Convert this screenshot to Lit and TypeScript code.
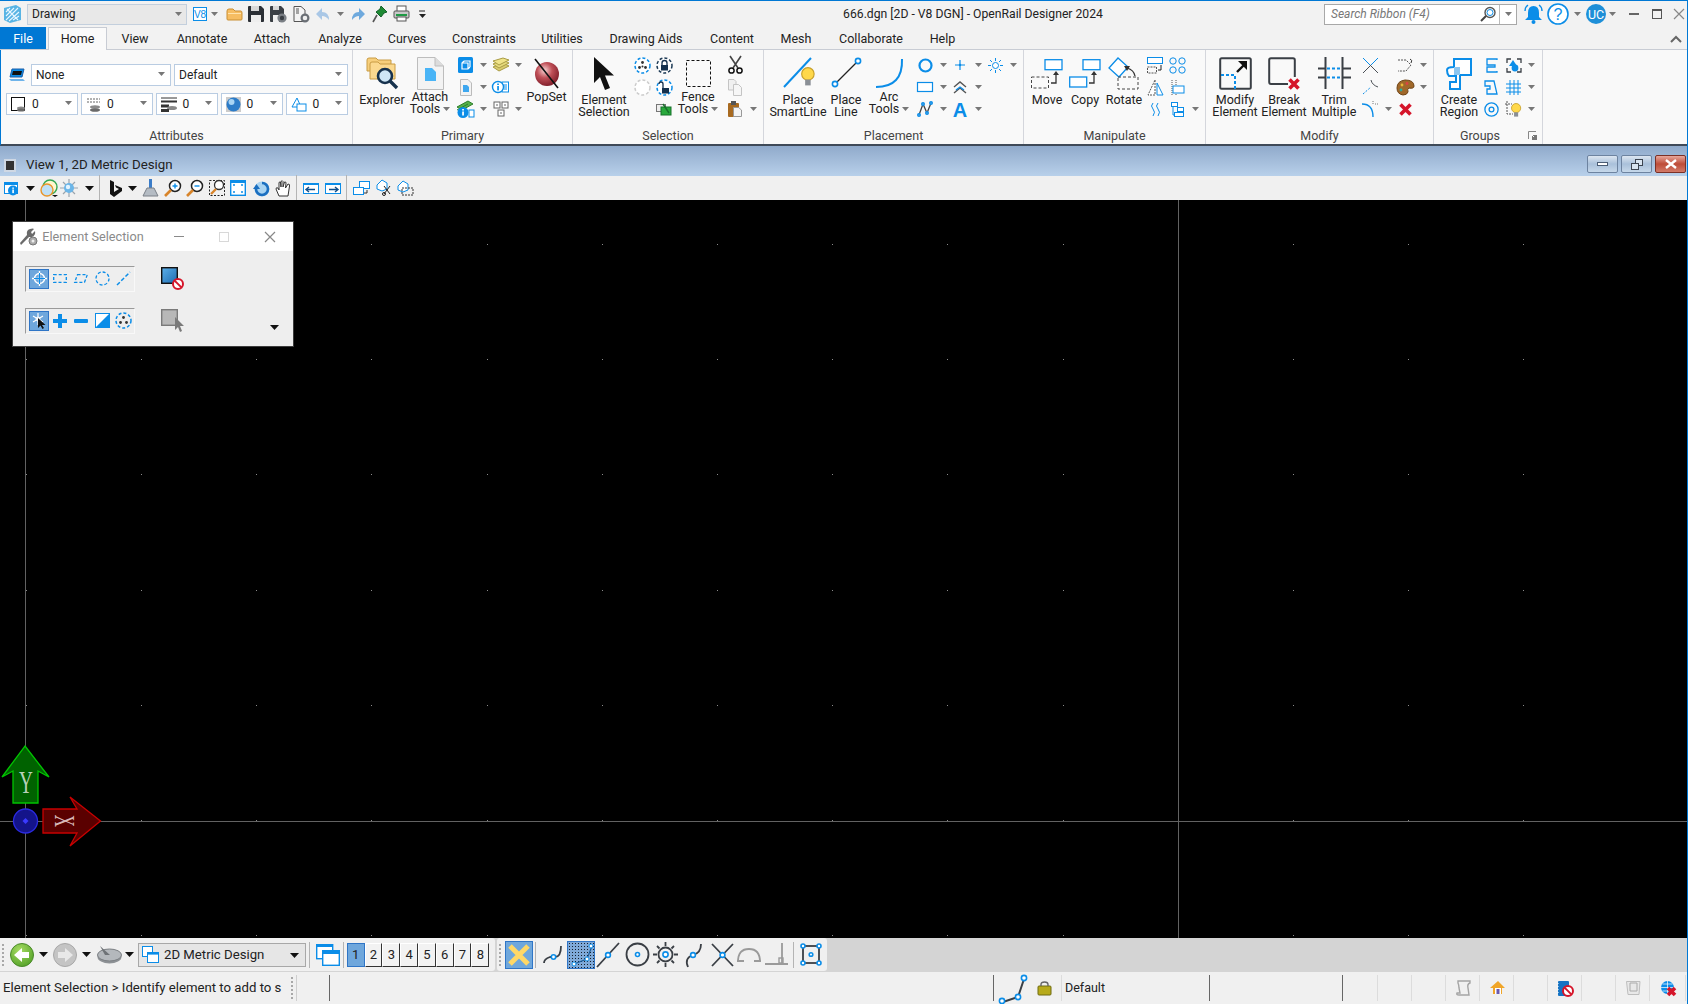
import { LitElement, html, css, svg } from 'lit';
import { customElement } from 'lit/decorators.js';

const B = '#0b8de8';
const D = '#3a3f45';
const R = '#d5152a';

type Ico = { w: number; h: number; b: unknown };
const ic = (w: number, h: number, b: unknown): Ico => ({ w, h, b });

const bulb = (x: number, y: number, s = 1) => svg`<g transform="translate(${x} ${y}) scale(${s})"><circle cx="6" cy="6" r="5.4" fill="#ffd84a" stroke="#c8a02a"/><rect x="3.6" y="11" width="4.8" height="5" fill="#8a8f96"/></g>`;
const redX = (x: number, y: number, s = 5) => svg`<path d="M${x - s} ${y - s}L${x + s} ${y + s}M${x + s} ${y - s}L${x - s} ${y + s}" stroke="${R}" stroke-width="3.6"/>`;
const no = (x: number, y: number) => svg`<circle cx="${x}" cy="${y}" r="5" fill="#fff" stroke="${R}" stroke-width="2"/><path d="M${x - 3.4} ${y - 3.4}L${x + 3.4} ${y + 3.4}" stroke="${R}" stroke-width="2"/>`;
const node = (x: number, y: number, r = 2.2) => svg`<circle cx="${x}" cy="${y}" r="${r}" fill="#fff" stroke="${B}" stroke-width="1.6"/>`;

const I: Record<string, Ico> = {
  arr: ic(7, 4, svg`<path d="M0 0H7L3.5 4Z" fill="#777"/>`),
  blk: ic(9, 5, svg`<path d="M0 0H9L4.5 5Z" fill="#111"/>`),
  sep: ic(1, 26, svg`<rect width="1" height="26" fill="#b4b4b4"/>`),
  grip: ic(2, 22, svg`<path d="M1 0V22" stroke="#a8a8a8" stroke-width="2" stroke-dasharray="2 2"/>`),
  logo: ic(17, 18, svg`<path d="M0 3L12 0L17 3V15L6 18L0 15Z" fill="#58b4e4"/><path d="M2 15L14 3M5 16L15 7M2 11L10 3M2 7L6 3M9 15L15 11M3 4L14 15" stroke="#e8f6ff" stroke-width="1.1"/>`),
  v8: ic(14, 14, svg`<rect x=".5" y=".5" width="13" height="13" fill="#fff" stroke="${B}"/><text x="7" y="11" font-size="10" font-family="Liberation Sans" text-anchor="middle" fill="${B}">V8</text>`),
  folder: ic(17, 13, svg`<path d="M1 3Q1 1 3 1H7L9 3H15Q16 3 16 5V11Q16 12 15 12H2Q1 12 1 11Z" fill="#f6bd62" stroke="#c98f35"/><rect x="2" y="5" width="13" height="1" fill="#ffe3ac"/>`),
  save: ic(16, 16, svg`<path d="M0 1Q0 0 1 0H13L16 3V15Q16 16 15 16H1Q0 16 0 15Z" fill="#2b2f35"/><rect x="3" y="0" width="8" height="5" fill="#d8d8d8"/><rect x="3" y="9" width="10" height="7" fill="#eee"/>`),
  saveset: ic(17, 17, svg`<path d="M0 1Q0 0 1 0H11L14 3V15Q14 16 13 16H1Q0 16 0 15Z" fill="#3a3f45"/><rect x="3" y="0" width="6" height="4" fill="#d8d8d8"/><rect x="3" y="9" width="6" height="7" fill="#eee"/><circle cx="12" cy="12" r="3.4" fill="none" stroke="#7a7f85" stroke-width="2.4"/>`),
  docset: ic(17, 17, svg`<path d="M1 .5H8L12 4V15.5H1Z" fill="#f4f4f4" stroke="#555"/><path d="M3 3H6M3 5H6M3 7H6" stroke="#555"/><circle cx="12" cy="12" r="3.4" fill="#eee" stroke="#6a6f75" stroke-width="2.2"/>`),
  undo: ic(14, 13, svg`<path d="M6 0L0 6L6 12V8Q10 8 13 12Q13 4 6 4Z" fill="#a9c7e6"/>`),
  redo: ic(14, 13, svg`<path d="M8 0L14 6L8 12V8Q4 8 1 12Q1 4 8 4Z" fill="#6ea9dd"/>`),
  pin: ic(14, 17, svg`<path d="M8 0L14 6L11 7L8 11L3 6L7 3Z" fill="#1e8a34" stroke="#14602a"/><path d="M4 9L0 16" stroke="#555" stroke-width="1.6"/>`),
  print: ic(17, 16, svg`<rect x="4" y="0" width="9" height="6" fill="#fff" stroke="#555"/><rect x="1" y="5" width="15" height="7" rx="1" fill="#c8c8c8" stroke="#555"/><rect x="3" y="8" width="11" height="2" fill="#1e9a44"/><rect x="4" y="11" width="9" height="4" fill="#fff" stroke="#555"/>`),
  more: ic(7, 7, svg`<path d="M0 0H6" stroke="#222"/><path d="M0 3H7L3.5 7Z" fill="#222"/>`),
  searchI: ic(16, 16, svg`<circle cx="10" cy="6.5" r="5" fill="none" stroke="#555" stroke-width="1.4"/><circle cx="10" cy="6.5" r="3" fill="none" stroke="${B}"/><path d="M6 10L1 15" stroke="#444" stroke-width="2"/>`),
  bell: ic(21, 22, svg`<path d="M10.5 3Q16 3 16 10V14L19 17H2L5 14V10Q5 3 10.5 3Z" fill="${B}"/><circle cx="10.5" cy="19" r="2" fill="${B}"/><path d="M2 8Q2 4 5 2M19 8Q19 4 16 2" fill="none" stroke="${B}" stroke-width="1.4"/>`),
  help: ic(22, 22, svg`<circle cx="11" cy="11" r="10" fill="#fff" stroke="${B}" stroke-width="1.6"/><text x="11" y="16.5" font-size="16" font-family="Liberation Sans" text-anchor="middle" fill="${B}">?</text>`),
  uc: ic(20, 20, svg`<circle cx="10" cy="10" r="10" fill="#1e8fd8"/><text x="10" y="14.5" font-size="12.5" font-family="Roboto" text-anchor="middle" fill="#fff">UC</text>`),
  wmin: ic(10, 2, svg`<rect width="10" height="2" fill="#666"/>`),
  wmax: ic(10, 10, svg`<rect x=".5" y=".5" width="9" height="9" fill="none" stroke="#555" stroke-width="1"/><rect width="10" height="2" fill="#555"/>`),
  wclose: ic(10, 10, svg`<path d="M0 0L10 10M10 0L0 10" stroke="#888" stroke-width="1.2"/>`),
  chev: ic(12, 6, svg`<path d="M1 6L6 1L11 6" fill="none" stroke="#666" stroke-width="2"/>`),
  vmin: ic(11, 4, svg`<rect x=".5" y=".5" width="10" height="3" fill="#fff" stroke="#4a5c74"/>`),
  vrest: ic(12, 11, svg`<rect x="4.5" y=".5" width="7" height="6" fill="#d8e4f0" stroke="#3c4450"/><rect x=".5" y="4.5" width="7" height="6" fill="#d8e4f0" stroke="#3c4450"/>`),
  // attributes
  layerI: ic(16, 15, svg`<path d="M3 1H15L13 9H1Z" fill="${B}" stroke="#1d5fa8"/><path d="M4 3H13L12 7H3Z" fill="#111"/><path d="M0 11H14L16 13H2Z" fill="#6fb4ea"/>`),
  colorA: ic(15, 15, svg`<rect x=".5" y=".5" width="13" height="13" fill="#fff" stroke="#111"/><ellipse cx="10" cy="11" rx="4" ry="1.6" fill="#8a8a8a"/><ellipse cx="10" cy="13" rx="4" ry="1.6" fill="#6a6a6a"/>`),
  styleA: ic(15, 15, svg`<path d="M1 2H14M1 5H14" stroke="#666" stroke-dasharray="2 1"/><ellipse cx="9" cy="10" rx="5" ry="1.8" fill="#8a8a8a"/><ellipse cx="9" cy="13" rx="5" ry="1.8" fill="#6a6a6a"/>`),
  weightA: ic(16, 15, svg`<path d="M0 1H16" stroke="#333"/><path d="M0 4.5H16" stroke="#333" stroke-width="2"/><path d="M0 9H8" stroke="#333" stroke-width="3"/><ellipse cx="11" cy="11" rx="5" ry="2" fill="#888"/><path d="M0 13.5H8" stroke="#333" stroke-width="3"/>`),
  transA: ic(15, 15, svg`<rect width="15" height="15" fill="#ccc"/><circle cx="7.5" cy="7.5" r="7" fill="#2d7cc8"/><circle cx="5.5" cy="5" r="3" fill="#a8d4f4"/>`),
  prioA: ic(16, 15, svg`<path d="M6 1L1 10H10Z" fill="#fff" stroke="${B}"/><rect x="6" y="7" width="9" height="7" fill="#fff" stroke="${B}"/>`),
  // primary
  explorer: ic(34, 33, svg`<path d="M2 3Q2 1 4 1H11L13 3H26V14H2Z" fill="#f7cf7c" stroke="#c99c45"/><path d="M5 7Q5 5 7 5H13L15 7H30V22H5Z" fill="#fbd98f" stroke="#c99c45"/><circle cx="20" cy="19" r="7" fill="#cfe6f5" stroke="#17324d" stroke-width="2.6"/><path d="M25 24L32 31" stroke="#17324d" stroke-width="3.4"/>`),
  attach: ic(27, 33, svg`<path d="M.5 .5H18L26.5 9V32.5H.5Z" fill="#f3f3f3" stroke="#bdbdbd"/><path d="M18 .5V9H26.5" fill="#dcdcdc" stroke="#bdbdbd"/><path d="M8 11H15L19 15V24H8Z" fill="#49b4f6"/>`),
  box3d: ic(15, 16, svg`<rect width="15" height="16" rx="1.5" fill="${B}"/><path d="M6 4H12V10M6 4L4 6V12H10L12 10M4 6H10V12" fill="none" stroke="#fff" stroke-width="1.2"/>`),
  sheets: ic(16, 14, svg`<path d="M0 9L10 5L16 8L6 13Z" fill="#d9cc70" stroke="#a99c45"/><path d="M0 6L10 2L16 5L6 10Z" fill="#e6da7c" stroke="#a99c45"/><path d="M0 3L10 0L16 2L6 7Z" fill="#f0e48a" stroke="#a99c45"/>`),
  pageB: ic(12, 17, svg`<path d="M.5 .5H8L11.5 4V16.5H.5Z" fill="#f3f3f3" stroke="#bbb"/><path d="M3 6H7L9 8V13H3Z" fill="#3ea7ef"/>`),
  infoBox: ic(16, 12, svg`<rect x="9" y="1" width="6.5" height="10" fill="#fff" stroke="${B}"/><path d="M10.5 4H14M10.5 6H14M10.5 8H14" stroke="${B}"/><circle cx="5" cy="6" r="5.5" fill="#fff" stroke="${B}" stroke-width="1.4"/><rect x="4.2" y="2.5" width="1.7" height="1.5" fill="${B}"/><rect x="4.2" y="5" width="1.7" height="4.4" fill="${B}"/>`),
  refG: ic(17, 17, svg`<path d="M0 6L11 0L16 3L5 9Z" fill="#57b04a" stroke="#2d7f2a"/><path d="M0 9L11 3" stroke="#2d7f2a"/><circle cx="6" cy="11.5" r="5.5" fill="${B}"/><rect x="5.2" y="8" width="1.7" height="1.5" fill="#fff"/><rect x="5.2" y="10.5" width="1.7" height="4" fill="#fff"/><rect x="12" y="9" width="5" height="7" fill="#fff" stroke="${B}"/>`),
  tree: ic(16, 16, svg`<rect x="1" y="1" width="6" height="6" fill="#fff" stroke="#666"/><rect x="9" y="1" width="6" height="6" fill="#fff" stroke="#666"/><rect x="5" y="9" width="6" height="6" fill="#fff" stroke="#666"/><path d="M4 3V5M12 3V5M8 11V13" stroke="#666"/>`),
  popset: ic(27, 31, svg`<defs><radialGradient id="ps" cx=".4" cy=".35" r=".7"><stop offset="0" stop-color="#f8d4d4"/><stop offset=".45" stop-color="#c05058"/><stop offset="1" stop-color="#7a1a26"/></radialGradient></defs><circle cx="14" cy="16" r="12" fill="url(#ps)"/><path d="M2 1L25 30" stroke="#111" stroke-width="1.6"/>`),
  // selection
  cursor: ic(22, 33, svg`<path d="M1 0V26L7 20L12 33L17 31L12 18.5H21Z" fill="#111"/>`),
  selDots: ic(17, 17, svg`<circle cx="8.5" cy="8.5" r="7.5" fill="#fff" stroke="${B}" stroke-width="1.5" stroke-dasharray="3 2"/><circle cx="8.5" cy="5.5" r="1.4" fill="#333"/><circle cx="5.5" cy="10.5" r="1.4" fill="#333"/><circle cx="11.5" cy="10.5" r="1.4" fill="#333"/><circle cx="8.5" cy="9.5" r="1" fill="#333"/>`),
  selLock: ic(17, 17, svg`<circle cx="8.5" cy="8.5" r="7.5" fill="#fff" stroke="#1d3a55" stroke-width="1.5" stroke-dasharray="3 2"/><rect x="5" y="8" width="7" height="5.5" fill="#14304d"/><path d="M6 8V6Q6 3.5 8.5 3.5T11 6V8" fill="none" stroke="#14304d" stroke-width="1.3"/>`),
  selGray: ic(17, 17, svg`<circle cx="8.5" cy="8.5" r="7.5" fill="#fff" stroke="#ccc" stroke-width="1.5" stroke-dasharray="3 2"/>`),
  selOpen: ic(17, 17, svg`<circle cx="8.5" cy="8.5" r="7.5" fill="#fff" stroke="${B}" stroke-width="1.5" stroke-dasharray="3 2"/><rect x="6" y="9" width="7" height="5.5" fill="#14304d"/><path d="M7 9V5Q7 3 5 3T3 5" fill="none" stroke="#14304d" stroke-width="1.3"/>`),
  greenCp: ic(16, 14, svg`<rect x=".5" y="2.5" width="9" height="7" fill="#eee" stroke="#777"/><rect x="5" y="5" width="10" height="8" fill="#29a93c" stroke="#17702a"/><path d="M7 2L13 11" stroke="#17702a" stroke-width="1.4"/>`),
  fence: ic(25, 27, svg`<rect x=".5" y=".5" width="24" height="26" fill="none" stroke="#111" stroke-dasharray="3 2"/>`),
  scissors: ic(15, 18, svg`<path d="M2 0L10 12M13 0L5 12" stroke="#444" stroke-width="1.6"/><circle cx="3.5" cy="14.5" r="2.6" fill="none" stroke="#111" stroke-width="1.5"/><circle cx="11.5" cy="14.5" r="2.6" fill="none" stroke="#111" stroke-width="1.5"/>`),
  copyG: ic(14, 17, svg`<path d="M.5 .5H6L8 2.5V11H.5Z" fill="#f0f0f0" stroke="#c4c4c4"/><path d="M5.5 5.5H10.5L13.5 8.5V16.5H5.5Z" fill="#f6f6f6" stroke="#c4c4c4"/>`),
  paste: ic(14, 16, svg`<rect x="0" y="2" width="11" height="14" rx="1" fill="#a86a20"/><rect x="3" y="0" width="5" height="4" fill="#555"/><path d="M5.5 6.5H10.5L13.5 9V15.5H5.5Z" fill="#f4f4f4" stroke="#999"/>`),
  // placement
  smart: ic(31, 32, svg`<path d="M1 30L28 1" stroke="${B}" stroke-width="2"/>${bulb(18, 10, 1.15)}`),
  pline: ic(31, 31, svg`<path d="M4 27L27 4" stroke="#222" stroke-width="1.2"/>${node(4, 27, 2.6)}${node(27, 4, 2.6)}`),
  arc: ic(29, 31, svg`<path d="M1 29Q28 29 27 1" fill="none" stroke="${B}" stroke-width="2"/>`),
  circ: ic(15, 15, svg`<circle cx="7.5" cy="7.5" r="6" fill="none" stroke="${B}" stroke-width="2.2"/>`),
  plus: ic(10, 10, svg`<path d="M5 0V10M0 5H10" stroke="${B}" stroke-width="1.2"/><circle cx="5" cy="5" r="1.2" fill="${B}"/>`),
  sunB: ic(15, 15, svg`<circle cx="7.5" cy="7.5" r="3" fill="#fff" stroke="${B}"/><path d="M7.5 0V3M7.5 12V15M0 7.5H3M12 7.5H15M2 2L4 4M11 11L13 13M13 2L11 4M4 11L2 13" stroke="${B}"/>`),
  rectB: ic(16, 10, svg`<rect x=".5" y=".5" width="15" height="9" fill="#fff" stroke="${B}" stroke-width="1.2"/>`),
  chevs: ic(14, 13, svg`<path d="M1 6L7 1L13 6M1 12L7 7L13 12" fill="none" stroke="#555" stroke-width="1.4"/><path d="M3 9L7 6L11 9" fill="none" stroke="${B}" stroke-width="1.4"/>`),
  poly: ic(16, 16, svg`<path d="M2 14L6 3L10 12L14 2" fill="none" stroke="#444" stroke-width="1.3"/>${node(2, 14, 1.2)}${node(6, 3, 1.2)}${node(10, 12, 1.2)}${node(14, 2, 1.2)}`),
  textA: ic(14, 16, svg`<text x="7" y="16" font-size="20" font-weight="700" font-family="Liberation Sans" text-anchor="middle" fill="${B}">A</text>`),
  // manipulate
  move: ic(33, 30, svg`<rect x="14" y=".7" width="17" height="10" fill="#fff" stroke="${B}" stroke-width="1.3"/><rect x=".5" y="18" width="17" height="11" fill="none" stroke="#444" stroke-dasharray="3 2"/><path d="M20 24H25V15" fill="none" stroke="#333" stroke-width="1.3"/><path d="M22 16L25 12L28 16Z" fill="#333"/>`),
  copyT: ic(33, 30, svg`<rect x="14" y=".7" width="17" height="10" fill="#fff" stroke="${B}" stroke-width="1.3"/><rect x=".7" y="18" width="17" height="10" fill="#fff" stroke="${B}" stroke-width="1.3"/><path d="M20 24H25V15" fill="none" stroke="#333" stroke-width="1.3"/><path d="M22 16L25 12L28 16Z" fill="#333"/>`),
  rotate: ic(32, 33, svg`<path d="M1 11L10 1L20 10L11 20Z" fill="#fff" stroke="${B}" stroke-width="1.3"/><rect x="10" y="20" width="20" height="12" fill="none" stroke="#444" stroke-dasharray="3 2"/><path d="M27 19Q26 13 19 11" fill="none" stroke="#333" stroke-width="1.3"/><path d="M16 9L22 9L19 14Z" fill="#333"/>`),
  moveS: ic(17, 17, svg`<rect x=".5" y=".5" width="15" height="6" fill="#fff" stroke="${B}"/><rect x=".5" y="10" width="9" height="6" fill="none" stroke="#555" stroke-dasharray="2 1"/><path d="M11 13H14V8" fill="none" stroke="#222"/>`),
  array: ic(17, 17, svg`<circle cx="4" cy="4" r="3.2" fill="none" stroke="${B}"/><circle cx="13" cy="4" r="3.2" fill="none" stroke="${B}"/><circle cx="4" cy="13" r="3.2" fill="none" stroke="${B}"/><circle cx="13" cy="13" r="3.2" fill="none" stroke="${B}"/>`),
  mirror: ic(17, 17, svg`<path d="M8 1V16H1Z" fill="#fff" stroke="#555" stroke-dasharray="2 1"/><path d="M10 4V16H16Z" fill="#fff" stroke="${B}"/>`),
  align: ic(15, 15, svg`<path d="M2 0V15" stroke="#555" stroke-dasharray="1 1"/><path d="M6 0V15" stroke="#555" stroke-dasharray="1 1"/><rect x="3" y="6" width="11" height="7" fill="#fff" stroke="${B}"/>`),
  waves: ic(10, 15, svg`<path d="M3 1Q0 4 3 7T3 14M8 1Q5 4 8 7T8 14" fill="none" stroke="${B}"/>`),
  stackB: ic(13, 15, svg`<rect x=".5" y=".5" width="6" height="4" fill="#fff" stroke="${B}"/><rect x="6.5" y="5.5" width="6" height="4" fill="#fff" stroke="${B}"/><rect x="3.5" y="10.5" width="9" height="4" fill="#fff" stroke="${B}"/><path d="M2 5V13H3" fill="none" stroke="${B}"/>`),
  // modify
  modify: ic(33, 33, svg`<rect x="1.2" y="1.2" width="30.6" height="30.6" rx="1.5" fill="none" stroke="${D}" stroke-width="2"/><path d="M2 18H16V32" fill="none" stroke="${B}" stroke-width="2" stroke-dasharray="3 2"/><path d="M18 15L27 6" stroke="#111" stroke-width="2.4"/><path d="M28 4V13L19 4Z" fill="#111"/>`),
  breakE: ic(33, 33, svg`<path d="M20 27H3Q1.2 27 1.2 25V3Q1.2 1.2 3 1.2H25Q26.8 1.2 26.8 3V20" fill="none" stroke="${D}" stroke-width="2"/>${redX(26, 27, 4.5)}`),
  trim: ic(33, 32, svg`<path d="M7.5 0V32M24.5 0V32M0 11.5H7M25 11.5H33M0 20.5H7M25 20.5H33" stroke="${D}" stroke-width="2"/><path d="M9 11.5H24M9 20.5H24" stroke="${B}" stroke-width="2" stroke-dasharray="3 2"/>`),
  xline: ic(17, 17, svg`<path d="M1 1L16 16M16 1L1 16" stroke="#4a4f55" stroke-width="1"/><path d="M1 1L8 8M16 1L9 8" stroke="${B}" stroke-width="1"/>`),
  ext: ic(17, 17, svg`<path d="M1 15L9 8" stroke="${B}" stroke-dasharray="2 1.5"/><path d="M9 1Q10 6 16 8" fill="none" stroke="#4a4f55"/>`),
  fillet: ic(17, 17, svg`<path d="M0 3Q11 3 11 16" fill="none" stroke="${B}" stroke-width="1.4"/><path d="M11 0V4M13 3H17" stroke="#777" stroke-dasharray="1 1"/>`),
  chamf: ic(17, 15, svg`<path d="M1 2H9L14 7L9 13H1" fill="none" stroke="#555" stroke-dasharray="2 1"/><path d="M13 1Q16 2 14 5" fill="none" stroke="#333"/>`),
  palette: ic(17, 15, svg`<path d="M8 0Q17 0 17 6Q17 9 12 8Q10 9 11 12Q10 15 6 15Q0 14 0 8Q0 1 8 0Z" fill="#a0682a" stroke="#6e4416"/><circle cx="5" cy="5" r="1.4" fill="#e8b83a"/><circle cx="10" cy="3.5" r="1.4" fill="#d44"/><circle cx="4" cy="10" r="1.4" fill="#3a9"/>`),
  redx: ic(13, 13, redX(6.5, 6.5, 5)),
  // groups
  region: ic(27, 32, svg`<path d="M8 1H25V17H14V31H4V24H10V18H3Q1 16 1 12Q1 9 8 9Z" fill="#fff" stroke="${B}" stroke-width="2"/><rect x="8" y="9" width="6" height="8" fill="#8cc6f0"/>`),
  gc1: ic(14, 15, svg`<path d="M13 2V1H3V7H11V9H3V14H13V13" fill="none" stroke="${B}" stroke-width="1.3"/>`),
  gc2: ic(14, 15, svg`<path d="M1 1H10L13 14H3V9H6V6H1Z" fill="none" stroke="${B}" stroke-width="1.3"/>`),
  gc3: ic(15, 15, svg`<circle cx="7.5" cy="7.5" r="6.6" fill="none" stroke="${B}" stroke-width="1.3"/><circle cx="7.5" cy="7.5" r="2.4" fill="none" stroke="${B}" stroke-width="1.3"/>`),
  gc4: ic(16, 15, svg`<path d="M1 5V1H5M11 1H15V5M15 10V14H11M5 14H1V10" fill="none" stroke="${D}" stroke-width="1.3"/><path d="M7 2L11 8H3Z" fill="${B}"/><circle cx="9" cy="10" r="3.4" fill="${B}"/>`),
  hash: ic(15, 15, svg`<path d="M4 0V15M8 0V15M12 0V15M0 4H15M0 8H15M0 12H15" stroke="${B}"/>`),
  gc6: ic(17, 17, svg`<path d="M2 0V13H8M0 3H7" fill="none" stroke="#555" stroke-dasharray="2 1"/>${bulb(6, 2, .85)}`),
  launch: ic(9, 9, svg`<path d="M.5 .5H8M.5 .5V8" stroke="#888" fill="none"/><rect x="4" y="4" width="5" height="5" fill="#777"/><path d="M3 3L6 6" stroke="#fff"/>`),
  // view toolbar
  viewI: ic(16, 16, svg`<rect x=".5" y="2.5" width="13" height="11" fill="#fff" stroke="${B}"/><rect y="2" width="14" height="3" fill="${B}"/><circle cx="9" cy="10.5" r="5" fill="${B}"/><rect x="8.3" y="7.5" width="1.6" height="1.3" fill="#fff"/><rect x="8.3" y="9.5" width="1.6" height="3.6" fill="#fff"/>`),
  levels: ic(18, 18, svg`<circle cx="10" cy="8" r="7" fill="#fff6cf" stroke="#35a853" stroke-width="1.4"/><circle cx="7" cy="11" r="6" fill="#bfe0f6" stroke="#e8952a" stroke-width="1.4"/><path d="M12 16H18L15 18Z" fill="#111"/>`),
  sun: ic(18, 18, svg`<path d="M9 0V18M0 9H18M3 3L15 15M15 3L3 15" stroke="#9aa4ad" stroke-width="1.2"/><circle cx="9" cy="9" r="5" fill="#6cb6e8"/><circle cx="8" cy="8" r="2.2" fill="#e4f4ff"/>`),
  bing: ic(13, 17, svg`<path d="M1 0L5 2V12L10 9L7 7.5L6 5L13 8V11L5 17L1 14Z" fill="#111"/>`),
  brush: ic(15, 18, svg`<rect x="6" y="0" width="3" height="9" fill="#3a7cc8"/><path d="M4 9H11L15 17H0Z" fill="#b5bcc4" stroke="#7a8088"/>`),
  zoomin: ic(18, 18, svg`<circle cx="11" cy="7" r="5.5" fill="#fff" stroke="#222" stroke-width="1.5"/><path d="M8.5 7H13.5M11 4.5V9.5" stroke="${B}" stroke-width="1.4"/><path d="M7 11L1 17" stroke="#d8842a" stroke-width="2.6"/>`),
  zoomout: ic(18, 18, svg`<circle cx="11" cy="7" r="5.5" fill="#fff" stroke="#222" stroke-width="1.5"/><path d="M8.5 7H13.5" stroke="${B}" stroke-width="1.4"/><path d="M7 11L1 17" stroke="#d8842a" stroke-width="2.6"/>`),
  zoomwin: ic(17, 18, svg`<rect x=".5" y="1.5" width="15" height="15" fill="none" stroke="#222" stroke-dasharray="2 1.5"/><circle cx="10" cy="6" r="4.5" fill="#fff" stroke="#333" stroke-width="1.3"/><path d="M7 10L2 15" stroke="#d8842a" stroke-width="2.4"/>`),
  fit: ic(16, 16, svg`<rect x=".7" y=".7" width="14.6" height="14.6" fill="#fff" stroke="${B}" stroke-width="1.4"/><rect x="0" y="0" width="16" height="3" fill="${B}"/><path d="M3 5H5M11 5H13M3 12H5M11 12H13" stroke="${B}" stroke-width="1.4"/>`),
  rotV: ic(17, 17, svg`<circle cx="9" cy="9" r="7.5" fill="#a9d4f2"/><path d="M9 3A6 6 0 1 1 3 9" fill="none" stroke="#1b6fc0" stroke-width="2.6"/><path d="M0 9H7L3.5 4Z" fill="#1b6fc0"/>`),
  hand: ic(16, 17, svg`<path d="M4 16L1 9Q1 7 3 8L4 10V3Q4 1.5 5.5 2L6 7V1.5Q7.5 0 8 1.5V7L9.5 2Q11 1.5 11 3L10.5 8L13 4Q15 4 14.5 6L13 16Z" fill="#fff" stroke="#333"/>`),
  prev: ic(16, 11, svg`<rect x=".5" y=".5" width="15" height="10" fill="#fff" stroke="${B}"/><rect width="16" height="2" fill="${B}"/><path d="M3 6.5H12M6 4L3 6.5L6 9" fill="none" stroke="#114f8a" stroke-width="1.4"/>`),
  next: ic(16, 11, svg`<rect x=".5" y=".5" width="15" height="10" fill="#fff" stroke="${B}"/><rect width="16" height="2" fill="${B}"/><path d="M13 6.5H4M10 4L13 6.5L10 9" fill="none" stroke="#114f8a" stroke-width="1.4"/>`),
  winsD: ic(17, 15, svg`<rect x="6.5" y=".5" width="10" height="7" fill="#fff" stroke="${B}"/><rect x=".5" y="6.5" width="10" height="7" fill="#fff" stroke="${B}"/><path d="M11 12H14V9" fill="none" stroke="#333"/>`),
  clipV: ic(17, 18, svg`<path d="M1 6L6 1L11 4V10L6 12L1 10Z" fill="#fff" stroke="${B}"/><path d="M8 7L14 15M14 7L8 15" stroke="#222"/><circle cx="8" cy="15" r="1.5" fill="none" stroke="#222"/>`),
  dashV: ic(17, 16, svg`<path d="M1 6L6 1L11 4V10L6 12L1 10Z" fill="#fff" stroke="${B}"/><rect x="5" y="8" width="11" height="7" fill="none" stroke="#333" stroke-dasharray="2 1"/>`),
  // window tool
  wrench: ic(19, 18, svg`<path d="M2 17L1 15L8 7Q7 2 11 1Q14 0 15 1L12 4L13 6L16 3Q17 7 13 9L10 9Z" fill="#6a6a6a"/><circle cx="14" cy="13" r="4" fill="#aaa" stroke="#777"/><circle cx="14" cy="13" r="1.5" fill="#eee"/>`),
  aPoint: ic(15, 15, svg`<circle cx="7.5" cy="7.5" r="5" fill="none" stroke="#fff" stroke-width="1.4"/><path d="M7.5 0V15M0 7.5H15" stroke="#fff" stroke-width="1.4"/><path d="M7.5 2V13M2 7.5H13" stroke="${B}"/>`),
  dRect: ic(14, 9, svg`<rect x=".7" y=".7" width="12.6" height="7.6" fill="none" stroke="${B}" stroke-width="1.3" stroke-dasharray="3 2"/>`),
  dPara: ic(14, 9, svg`<path d="M3.5 .7H13.3L10.5 8.3H.7Z" fill="none" stroke="${B}" stroke-width="1.3" stroke-dasharray="3 2"/>`),
  dCirc: ic(15, 15, svg`<circle cx="7.5" cy="7.5" r="6.5" fill="none" stroke="${B}" stroke-width="1.3" stroke-dasharray="3 2"/>`),
  dLine: ic(15, 15, svg`<path d="M1 14L14 1" stroke="${B}" stroke-width="1.5" stroke-dasharray="4 2"/>`),
  noEl: ic(23, 23, svg`<defs><linearGradient id="ne" x1="0" y1="0" x2="1" y2="1"><stop offset="0" stop-color="#5cb0ea"/><stop offset="1" stop-color="#1d6bb0"/></linearGradient></defs><rect x=".7" y=".7" width="15.6" height="15.6" fill="url(#ne)" stroke="#111" stroke-width="1.4"/>${no(17, 17)}`),
  grayEl: ic(23, 23, svg`<rect x=".7" y=".7" width="15.6" height="15.6" fill="#b8b8b8" stroke="#7a7a7a" stroke-width="1.4"/><path d="M14 8V21L17 18L19 23L21 22L19 17H23Z" fill="#7a7a7a"/>`),
  aSnow: ic(15, 16, svg`<path d="M6 0V12M1 3L11 9M11 3L1 9" stroke="#fff" stroke-width="1.2"/><circle cx="6" cy="6" r="2" fill="none" stroke="#fff"/><path d="M6 5V15L8.5 12.5L10.5 16L12 15L10 12H13.5Z" fill="#111"/>`),
  sPlus: ic(14, 14, svg`<path d="M7 0V14M0 7H14" stroke="${B}" stroke-width="4"/>`),
  sMinus: ic(14, 4, svg`<rect width="14" height="4" rx="1" fill="${B}"/>`),
  half: ic(15, 15, svg`<rect x=".5" y=".5" width="14" height="14" fill="#fff" stroke="${B}"/><path d="M15 0V15H0Z" fill="${B}"/>`),
  sDots: ic(17, 17, svg`<circle cx="8.5" cy="8.5" r="7.5" fill="none" stroke="${B}" stroke-width="1.5" stroke-dasharray="3 2"/><circle cx="8.5" cy="5.5" r="1.4" fill="#333"/><circle cx="5.5" cy="10.5" r="1.4" fill="#333"/><circle cx="11.5" cy="10.5" r="1.4" fill="#333"/>`),
  // bottom
  back: ic(24, 24, svg`<defs><radialGradient id="bk" cx=".4" cy=".3" r=".8"><stop offset="0" stop-color="#a6dc62"/><stop offset="1" stop-color="#4f9e25"/></radialGradient></defs><circle cx="12" cy="12" r="11.5" fill="url(#bk)" stroke="#4a8a2a"/><path d="M4 12L12 5V9H19V15H12V19Z" fill="#fff"/>`),
  fwd: ic(24, 24, svg`<circle cx="12" cy="12" r="11.5" fill="#c4c4c4" stroke="#a8a8a8"/><path d="M20 12L12 5V9H5V15H12V19Z" fill="#e8e8e8"/>`),
  dish: ic(25, 19, svg`<ellipse cx="12.5" cy="12" rx="12" ry="6.5" fill="#8e9296"/><ellipse cx="12.5" cy="10" rx="12" ry="6" fill="#b4b8bc" stroke="#7a7e82"/><path d="M3 1L13 10H8Z" fill="#6e7276"/>`),
  wins: ic(17, 17, svg`<rect x=".5" y=".5" width="10" height="10" fill="#fff" stroke="${B}"/><rect x="5.5" y="6.5" width="11" height="10" fill="#fff" stroke="${B}"/><rect x="5" y="6" width="12" height="2.6" fill="${B}"/>`),
  winsL: ic(24, 22, svg`<rect x=".7" y=".7" width="16" height="14" fill="#fff" stroke="${B}" stroke-width="1.4"/><rect x="6.7" y="6.7" width="16.6" height="14.6" fill="#fff" stroke="${B}" stroke-width="1.4"/><rect x="6" y="6" width="18" height="4" fill="${B}"/><rect x="0" y="0" width="17" height="3" fill="${B}"/>`),
  xToggle: ic(22, 22, svg`<path d="M2 2L20 20M20 2L2 20" stroke="#ffd867" stroke-width="5"/>`),
  k1: ic(20, 18, svg`<path d="M1 17Q1 13 7 11H12Q18 11 18 0" fill="none" stroke="${D}" stroke-width="1.8"/>${node(10.5, 11, 2.2)}`),
  k2: ic(22, 24, svg`<path d="M4 21L17 16L22 3" fill="none" stroke="#1c5f9c" stroke-width="1.2"/><circle cx="4" cy="21" r="2" fill="#fff" stroke="${B}"/><circle cx="17" cy="16" r="2" fill="#fff" stroke="${B}"/><circle cx="21" cy="3" r="2" fill="#fff" stroke="${B}"/>`),
  k3: ic(24, 26, svg`<path d="M1 25L23 1" stroke="${D}" stroke-width="1.8"/>${node(12, 13, 2.4)}`),
  k4: ic(25, 25, svg`<circle cx="12.5" cy="12.5" r="11" fill="none" stroke="${D}" stroke-width="1.8"/>${node(12.5, 12.5, 2)}`),
  k5: ic(25, 25, svg`<circle cx="12.5" cy="12.5" r="7" fill="none" stroke="${D}" stroke-width="1.8"/><path d="M12.5 0V4M12.5 21V25M0 12.5H4M21 12.5H25M4 4L6.5 6.5M21 4L18.5 6.5M4 21L6.5 18.5M21 21L18.5 18.5" stroke="${D}" stroke-width="1.8"/>${node(12.5, 12.5, 2.6)}`),
  k6: ic(18, 24, svg`<path d="M3 24Q-1 15 8 12Q16 10 16 1" fill="none" stroke="${D}" stroke-width="1.8"/>${node(8, 12, 2.4)}`),
  k7: ic(23, 24, svg`<path d="M1 1L22 23M22 1L1 23" stroke="${D}" stroke-width="1.8"/>${node(11.5, 12, 2.4)}`),
  k8: ic(24, 14, svg`<path d="M1 14Q1 1 12 1T23 14M0 13H7M17 13H24" fill="none" stroke="#9a9a9a" stroke-width="1.8"/>`),
  k9: ic(23, 23, svg`<path d="M17 0V21M0 21H23" stroke="#9a9a9a" stroke-width="1.8"/><rect x="14" y="15" width="4" height="5" fill="none" stroke="#9a9a9a" stroke-width="1.4"/>`),
  k10: ic(22, 23, svg`<rect x="3" y="3" width="16" height="17" fill="none" stroke="${D}" stroke-width="1.8"/>${node(3, 3, 2)}${node(19, 3, 2)}${node(3, 20, 2)}${node(19, 20, 2)}${node(11, 11.5, 1.8)}`),
  snap: ic(28, 31, svg`<path d="M5 29L20 24L26 6" fill="none" stroke="${D}" stroke-width="2"/>${node(4, 28, 2.6)}${node(20, 24, 2.6)}${node(26, 5, 2.6)}`),
  lock: ic(13, 14, svg`<rect y="5" width="13" height="9" rx="1" fill="#b7aa1a" stroke="#6e6a10"/><path d="M3 5V3.5Q3 1 6.5 1T10 3.5V5" fill="none" stroke="#666" stroke-width="1.4"/>`),
  scroll: ic(16, 16, svg`<path d="M3 1H15V3Q12 4 13 8L14 15H4Q1 15 2 13H5L4 8Q4 5 3 3Z" fill="none" stroke="#a4a4a4" stroke-width="1.4"/>`),
  home: ic(15, 14, svg`<path d="M0 7L8 0L15 7L12 7V13H3V7Z" fill="#f0a528"/><rect x="5" y="7" width="6" height="6" fill="#fff"/><rect x="6.5" y="8" width="3" height="5" fill="#6a5ab0"/>`),
  book: ic(15, 15, svg`<rect x="0" y="0" width="11" height="15" rx="1" fill="#1674c4"/><path d="M0 2V13" stroke="#fff" stroke-dasharray="1 2"/>${no(10, 10)}`),
  grayB: ic(15, 14, svg`<path d="M.5 .5H14L13 13.5H2Z" fill="#e8e8e8" stroke="#bdbdbd"/><path d="M4 2H11V10H4Z" fill="none" stroke="#aaa"/>`),
  globe: ic(15, 15, svg`<circle cx="6.5" cy="6.5" r="6.5" fill="${B}"/><path d="M0 6.5H13M6.5 0V13M1.5 3H11.5M1.5 10H11.5" stroke="#fff" stroke-width=".7"/>${redX(10.5, 10.5, 3.5)}`),
};

const draw = (n: string) => {
  const c = I[n];
  return html`<svg width=${c.w} height=${c.h} viewBox="0 0 ${c.w} ${c.h}">${c.b}</svg>`;
};

// lays items out in flow so that each one is centred on the x it has in the data
type Item = [string | unknown, number, number?];
const row = (items: Item[], start = 0) => {
  let end = start;
  return items.map(([n, cx, w]) => {
    const width = typeof n === 'string' && I[n] ? I[n].w : (w ?? 0);
    const left = cx - width / 2 - end;
    end = cx + width / 2;
    return html`<span class="cell" style="margin-left:${left}px;width:${width}px"
      >${typeof n === 'string' && I[n] ? draw(n) : n}</span
    >`;
  });
};

const TABS: [string, number, number][] = [
  ['View', 135, 36], ['Annotate', 202, 60], ['Attach', 272, 48], ['Analyze', 340, 52], ['Curves', 407, 48],
  ['Constraints', 484, 72], ['Utilities', 562, 56], ['Drawing Aids', 646, 80], ['Content', 732, 56],
  ['Mesh', 796, 40], ['Collaborate', 871, 72], ['Help', 942.5, 36],
];

type Big = { big: string; cx: number; w: number; lines: string[]; up?: boolean; top?: number; drop?: boolean };
type Stack = { x0: number; x1: number; rows: Item[][] };
type Group = { label: string; x0: number; x1: number; items: (Big | Stack)[]; shift?: number; launcher?: boolean };

const GROUPS: Group[] = [
  { label: 'Primary', x0: 353, x1: 573, items: [
    { big: 'explorer', cx: 382, w: 50, lines: ['Explorer'], top: 3 },
    { big: 'attach', cx: 430, w: 38, lines: ['Attach', 'Tools'], up: true, top: 3, drop: true },
    { x0: 452, x1: 526, rows: [
      [['box3d', 465.5], ['arr', 483.6], ['sheets', 501], ['arr', 519]],
      [['pageB', 465.5], ['arr', 483.6], ['infoBox', 501]],
      [['refG', 465.5], ['arr', 483.6], ['tree', 501], ['arr', 519]],
    ] },
    { big: 'popset', cx: 546.5, w: 40, lines: ['PopSet'], up: true, top: 4 },
  ] },
  { label: 'Selection', x0: 573, x1: 764, items: [
    { big: 'cursor', cx: 604, w: 58, lines: ['Element', 'Selection'], top: 3 },
    { x0: 633, x1: 673, rows: [
      [['selDots', 642], ['selLock', 664]],
      [['selGray', 642], ['selOpen', 664]],
      [['greenCp', 664]],
    ] },
    { big: 'fence', cx: 698, w: 40, lines: ['Fence', 'Tools'], up: true, top: 6, drop: true },
    { x0: 725, x1: 760, rows: [
      [['scissors', 735]],
      [['copyG', 735]],
      [['paste', 735], ['arr', 753]],
    ] },
  ] },
  { label: 'Placement', x0: 764, x1: 1024, items: [
    { big: 'smart', cx: 798, w: 66, lines: ['Place', 'SmartLine'], top: 3 },
    { big: 'pline', cx: 846, w: 30, lines: ['Place', 'Line'], top: 3 },
    { big: 'arc', cx: 889, w: 40, lines: ['Arc', 'Tools'], up: true, top: 4, drop: true },
    { x0: 912, x1: 1020, rows: [
      [['circ', 925], ['arr', 943], ['plus', 960], ['arr', 978], ['sunB', 995], ['arr', 1013]],
      [['rectB', 925], ['arr', 943], ['chevs', 960], ['arr', 978]],
      [['poly', 925], ['arr', 943], ['textA', 960], ['arr', 978]],
    ] },
  ] },
  { label: 'Manipulate', x0: 1024, x1: 1206, items: [
    { big: 'move', cx: 1047, w: 34, lines: ['Move'], top: 5 },
    { big: 'copyT', cx: 1085, w: 34, lines: ['Copy'], top: 5 },
    { big: 'rotate', cx: 1124, w: 38, lines: ['Rotate'], top: 3 },
    { x0: 1145, x1: 1204, rows: [
      [['moveS', 1155], ['array', 1177]],
      [['mirror', 1155], ['align', 1177]],
      [['waves', 1155], ['stackB', 1177], ['arr', 1195]],
    ] },
  ] },
  { label: 'Modify', x0: 1206, x1: 1434, items: [
    { big: 'modify', cx: 1235, w: 44, lines: ['Modify', 'Element'], top: 3 },
    { big: 'breakE', cx: 1284, w: 44, lines: ['Break', 'Element'], top: 3 },
    { big: 'trim', cx: 1334, w: 46, lines: ['Trim', 'Multiple'], top: 3 },
    { x0: 1360, x1: 1432, rows: [
      [['xline', 1370], ['chamf', 1405.5], ['arr', 1423]],
      [['ext', 1370], ['palette', 1405.5], ['arr', 1423]],
      [['fillet', 1370], ['arr', 1388], ['redx', 1405.5]],
    ] },
  ] },
  { label: 'Groups', x0: 1434, x1: 1543, shift: 16, launcher: true, items: [
    { big: 'region', cx: 1459, w: 40, lines: ['Create', 'Region'], top: 4 },
    { x0: 1482, x1: 1540, rows: [
      [['gc1', 1491], ['gc4', 1513.5], ['arr', 1531]],
      [['gc2', 1491], ['hash', 1513.5], ['arr', 1531]],
      [['gc3', 1491], ['gc6', 1513.5], ['arr', 1531]],
    ] },
  ] },
];

const VIEWBAR: Item[] = [
  ['viewI', 12], ['blk', 30.5], ['levels', 49], ['sun', 69], ['blk', 89], ['sep', 99], ['bing', 115], ['blk', 132],
  ['brush', 150], ['zoomin', 173], ['zoomout', 194.5], ['zoomwin', 217], ['fit', 238], ['rotV', 261], ['hand', 283],
  ['sep', 296], ['prev', 311], ['next', 333], ['sep', 346.5], ['winsD', 361], ['clipV', 384], ['dashV', 405.5],
];

const ATTRS: [string, number][] = [['colorA', 72], ['styleA', 71.5], ['weightA', 62], ['transA', 62], ['prioA', 62]];

@customElement('app-root')
export class AppRoot extends LitElement {
  static styles = css`
    :host { display: block; width: 1688px; height: 1004px; overflow: hidden; font: 12px/16px Roboto, "Noto Sans", sans-serif; color: #222; }
    .app { display: flex; flex-direction: column; height: 1004px; background: #f0f0f0; border-right: 1px solid #0078d4; box-sizing: border-box; }
    svg { display: block; flex: none; overflow: visible; }
    .row { display: flex; align-items: center; }
    .cell { display: flex; align-items: center; justify-content: center; flex: none; white-space: nowrap; height: 100%; }

    .top { height: 27px; border-top: 1px solid #0078d4; box-sizing: border-box; background: #f2f2f2; }
    .qcombo { box-sizing: border-box; width: 100%; height: 21px; display: flex; align-items: center; padding: 0 4px; background: #e8e8e8; border: 1px solid #c3cfdd; justify-content: space-between; }
    .title { font-size: 12.2px; }
    .search { box-sizing: border-box; width: 100%; height: 21px; display: flex; align-items: center; background: #fff; border: 1px solid #a8a8a8; font-style: italic; color: #777; }
    .search span { flex: 1; padding-left: 6px; }
    .search .s2 { flex: none; border-left: 1px solid #bbb; width: 16px; height: 100%; display: flex; align-items: center; justify-content: center; }

    .tabs { height: 23px; box-sizing: border-box; border-bottom: 1px solid #c8ccd4; background: #f2f2f2; font-size: 12.5px; }
    .tabs .cell { padding-top: 1px; box-sizing: border-box; }
    .tabs .cell:nth-child(-n + 2) { padding-top: 0; }
    .file { width: 100%; height: 22px; background: #0078d4; color: #fff; display: flex; align-items: center; justify-content: center; padding-top: 1px; box-sizing: border-box; }
    .hometab { width: 100%; height: 23px; background: #fafafa; border: 1px solid #c8ccd4; border-bottom: 0; box-sizing: border-box; display: flex; align-items: center; justify-content: center; padding-top: 1px; }

    .ribbon { height: 96px; flex: none; display: flex; box-sizing: border-box; background: #f9f9f9; border-left: 1px solid #0078d4; border-bottom: 2px solid #3f4a58; }
    .group { flex: none; display: flex; flex-direction: column; height: 94px; box-sizing: border-box; border-right: 1px solid #d4d6dc; }
    .gbody { height: 76px; display: flex; padding-top: 4px; box-sizing: border-box; }
    .glabel { flex: 1; display: flex; align-items: center; justify-content: center; color: #444; position: relative; font-size: 12.5px; padding-top: 2px; }
    .launch { position: absolute; right: 5px; top: 5px; }
    .big { flex: none; display: flex; flex-direction: column; align-items: center; height: 72px; text-align: center; line-height: 12px; white-space: nowrap; font-size: 12.5px; }
    .bi { height: 40px; display: flex; justify-content: center; flex: none; box-sizing: border-box; }
    .up .bi { height: 37px; }
    .dropline { display: flex; align-items: center; gap: 3px; }
    .stack { flex: none; display: flex; flex-direction: column; }
    .sr { display: flex; height: 22px; align-items: center; }

    .attrs { padding: 14px 0 0 0; display: flex; flex-direction: column; gap: 7px; height: 76px; box-sizing: border-box; }
    .ar1, .ar2 { display: flex; gap: 3px; align-items: center; height: 22px; }
    .ar1 { padding-left: 8px; }
    .ar2 { padding-left: 5px; }
    .combo { box-sizing: border-box; height: 22px; display: flex; align-items: center; gap: 6px; background: #fff; border: 1px solid #b9cce2; padding: 0 4px; position: relative; flex: none; }
    .combo .dn { position: absolute; right: 5px; top: 7px; }
    .layerI { margin-right: 3px; }

    .vtitle { height: 30px; flex: none; display: flex; align-items: center; box-sizing: border-box; padding-top: 8px; background: linear-gradient(#90aacb, #b8d0ea); font-size: 13.3px; }
    .vdot { width: 8px; height: 9px; background: #333; margin: 0 12px 0 6px; outline: 2px solid #cfd8e4; }
    .vbtns { margin-left: auto; display: flex; gap: 3px; margin-right: 1px; }
    .vb { width: 31px; height: 18px; box-sizing: border-box; border: 1px solid #6d83a0; border-radius: 2px; background: linear-gradient(#dde6f1, #a9c0da 50%, #c6d8ea); display: flex; align-items: center; justify-content: center; margin-top: -2px; }
    .vb.close { background: linear-gradient(#e8a79c, #bd4c38 50%, #d27a68); border-color: #7b3026; }
    .vbar { height: 24px; flex: none; background: #f0f0f0; }

    .canvas { flex: 1; position: relative; background: #000; overflow: hidden; }
    .canvas > svg { position: absolute; left: 0; top: 0; }

    .tool { position: absolute; left: 12px; top: 21px; width: 282px; height: 126px; box-sizing: border-box; border: 1px solid #3c3c3c; background: #eeeeee; }
    .ttitle { height: 29px; background: #fff; font-size: 12.7px; color: #8a8a8a; }
    .tbody { display: flex; flex-direction: column; gap: 17px; padding-top: 15px; position: relative; }
    .tr { display: flex; align-items: center; height: 25px; }
    .tbox { box-sizing: border-box; width: 110px; height: 26px; margin-left: 12px; display: flex; align-items: center; border: 1px solid; border-color: #9a9a9a #f8f8f8 #f8f8f8 #9a9a9a; }
    .active { width: 20px; height: 20px; box-sizing: border-box; background: #6fa7dc; border: 1px solid #2f75c6; display: flex; align-items: center; justify-content: center; }
    .tmore { position: absolute; right: 14px; bottom: 3px; }

    .bbar { height: 34px; flex: none; background: #d4d4d4; display: flex; }
    .seg { height: 33px; background: #f0f0f0; border-radius: 0 3px 3px 0; display: flex; align-items: center; }
    .seg1 { width: 495px; }
    .seg2 { width: 330px; margin-left: 2px; border-radius: 3px; }
    .mcombo { box-sizing: border-box; width: 100%; height: 24px; background: #e6e6e6; border: 1px solid #a8a8a8; display: flex; align-items: center; position: relative; padding-left: 3px; gap: 5px; font-size: 13.2px; }
    .mcombo .dn { position: absolute; right: 6px; top: 9px; }
    .nums { display: flex; }
    .num { box-sizing: border-box; width: 17.8px; height: 24px; background: #f2f2f2; border: 1px solid #fff; border-right-color: #333; border-bottom-color: #333; display: flex; align-items: center; justify-content: center; font-size: 13px; }
    .num.on { background: #6fa7dc; border: 1px solid #2f75c6; }
    .tgl { box-sizing: border-box; width: 28px; height: 28px; background: #6fa7dc; border: 1px solid #2f75c6; display: flex; align-items: center; justify-content: center; }
    .dotted { box-sizing: border-box; width: 28px; height: 28px; border: 1px solid #2f75c6; background-color: #7fa9d8; background-image: radial-gradient(#16202c .7px, transparent .8px); background-size: 3px 3px; display: flex; align-items: center; justify-content: center; }

    .status { height: 32px; flex: none; display: flex; background: #f0f0f0; }
    .sc { flex: none; box-sizing: border-box; display: flex; align-items: center; height: 32px; position: relative; white-space: nowrap; }
    .sc::after { content: ''; position: absolute; right: 0; top: 3px; bottom: 3px; width: 1px; background: var(--sep, #dcdcdc); }
    .msg { overflow: hidden; }
    .msg span { display: block; width: 282px; overflow: hidden; padding-left: 3px; box-sizing: border-box; font-size: 13.2px; }
    .msg svg { margin-left: 9px; }
    .def { padding-left: 3px; font-size: 12.5px; }
    .ctr { justify-content: center; }
  `;

  private combo(w: number, label: unknown, icon?: string) {
    return html`<div class="combo" style="width:${w}px">${icon ? draw(icon) : ''}<span>${label}</span><span class="dn">${draw('arr')}</span></div>`;
  }

  private renderAttributes() {
    return html`<div class="group" style="width:352px">
      <div class="attrs">
        <div class="ar1">
          <span class="layerI">${draw('layerI')}</span>
          ${this.combo(140, 'None')}${this.combo(174, 'Default')}
        </div>
        <div class="ar2">${ATTRS.map(([n, w]) => this.combo(w, '0', n))}</div>
      </div>
      <div class="glabel">Attributes</div>
    </div>`;
  }

  private renderGroup(g: Group) {
    let end = g.x0;
    return html`<div class="group" style="width:${g.x1 - g.x0}px">
      <div class="gbody">
        ${g.items.map((it) => {
          if ('big' in it) {
            const left = it.cx - it.w / 2 - end;
            end = it.cx + it.w / 2;
            return html`<div class="big ${it.up ? 'up' : ''}" style="margin-left:${left}px;width:${it.w}px">
              <div class="bi" style="padding-top:${it.top}px">${draw(it.big)}</div>
              ${it.lines.map((l, i) => it.drop && i === it.lines.length - 1
                ? html`<div class="dropline">${l}${draw('arr')}</div>`
                : html`<div>${l}</div>`)}
            </div>`;
          }
          const left = it.x0 - end;
          end = it.x1;
          return html`<div class="stack" style="margin-left:${left}px;width:${it.x1 - it.x0}px">
            ${it.rows.map((r) => html`<div class="sr">${row(r, it.x0)}</div>`)}
          </div>`;
        })}
      </div>
      <div class="glabel" style="padding-right:${g.shift ?? 0}px">
        ${g.label}${g.launcher ? html`<span class="launch">${draw('launch')}</span>` : ''}
      </div>
    </div>`;
  }

  private renderCanvas() {
    const xs = Array.from({ length: 14 }, (_, i) => 25.8 + i * 115.2);
    const ys = Array.from({ length: 7 }, (_, i) => 244 + i * 115.2);
    return svg`<svg width="1688" height="738" viewBox="0 200 1688 738">
      ${ys.map((y) => xs.map((x) => svg`<rect x=${Math.round(x)} y=${Math.round(y)} width="1" height="1" fill="#8c8c8c"/>`))}
      <path d="M25.5 200V938M1178.5 200V938M0 821.5H1688" stroke="#626262"/>
      <path d="M25 746L49 777L38 771V803H13V771L2 777Z" fill="#006200" stroke="#00c400" stroke-width="1.3"/>
      <text transform="translate(26 793) scale(.62 1)" font-size="31" font-family="Liberation Serif" text-anchor="middle" fill="#b8d0b8">Y</text>
      <circle cx="25.5" cy="821" r="12" fill="#14148a" stroke="#2a2ae0" stroke-width="1.3"/>
      <path d="M25.5 818L28.5 821L25.5 824L22.5 821Z" fill="#3a3aff"/>
      <path d="M43 809H77L70 797L100.5 821L70 846L77 833H43Z" fill="#5a0000" stroke="#c80000" stroke-width="1.3"/>
      <text transform="translate(55 821) rotate(90) scale(.57 1)" font-size="30" font-family="Liberation Serif" text-anchor="middle" fill="#d8b8b8">X</text>
    </svg>`;
  }

  private renderTool() {
    const r1 = ['aPoint', 'dRect', 'dPara', 'dCirc', 'dLine'];
    const r2 = ['aSnow', 'sPlus', 'sMinus', 'half', 'sDots'];
    const line = (names: string[]) => row(
      names.map((n, i): Item => [i === 0 ? html`<span class="active">${draw(n)}</span>` : n, 13 + i * 21, i === 0 ? 20 : undefined]),
      0,
    );
    return html`<div class="tool">
      <div class="row ttitle">
        ${row([
          ['wrench', 15.5],
          [html`Element Selection`, 80, 101],
          [html`<svg width="10" height="1"><rect width="10" height="1" fill="#8a8a8a"/></svg>`, 166, 10],
          [html`<svg width="10" height="10"><rect x=".5" y=".5" width="9" height="9" fill="none" stroke="#d8d8d8"/></svg>`, 211, 10],
          ['wclose', 257],
        ], 0)}
      </div>
      <div class="tbody">
        <div class="tr"><div class="tbox">${line(r1)}</div>${row([['noEl', 159]], 122)}</div>
        <div class="tr"><div class="tbox">${line(r2)}</div>${row([['grayEl', 159]], 122)}</div>
        <span class="tmore">${draw('blk')}</span>
      </div>
    </div>`;
  }

  private renderBottom() {
    const nums = html`<div class="nums">
      ${[1, 2, 3, 4, 5, 6, 7, 8].map((n) => html`<div class="num ${n === 1 ? 'on' : ''}">${n}</div>`)}
    </div>`;
    const combo = html`<div class="mcombo">${draw('wins')}<span>2D Metric Design</span><span class="dn">${draw('blk')}</span></div>`;
    return html`<div class="bbar">
      <div class="seg seg1">
        ${row([
          ['grip', 3], ['back', 22], ['blk', 43.5], ['fwd', 65], ['blk', 86], ['dish', 109], ['blk', 129],
          [combo, 222, 168], ['sep', 309.5], ['winsL', 328], ['sep', 343.5], [nums, 418, 142],
        ], 0)}
      </div>
      <div class="seg seg2">
        ${row([
          ['grip', 500],
          [html`<span class="tgl">${draw('xToggle')}</span>`, 519, 28],
          ['sep', 535.5], ['k1', 553],
          [html`<span class="dotted">${draw('k2')}</span>`, 581, 28],
          ['k3', 608], ['k4', 637], ['k5', 665], ['k6', 694], ['k7', 722], ['k8', 749], ['k9', 776.6],
          ['sep', 794], ['k10', 811],
        ], 497)}
      </div>
    </div>`;
  }

  private renderStatus() {
    const lightCell = (w: number, n?: string) => html`<div class="sc ctr" style="width:${w}px">${n ? draw(n) : ''}</div>`;
    return html`<div class="status">
      <div class="sc msg" style="width:297px;--sep:#cfcfcf">
        <span>Element Selection &gt; Identify element to add to s</span>
        ${draw('grip')}
      </div>
      <div class="sc" style="width:33px;--sep:#666"></div>
      <div class="sc" style="width:664px;--sep:#666"></div>
      <div class="sc" style="width:68px">${row([['snap', 1012], ['lock', 1044]], 994)}</div>
      <div class="sc def" style="width:148px;--sep:#666">Default</div>
      <div class="sc" style="width:133px;--sep:#666"></div>
      ${lightCell(35)}${lightCell(34)}${lightCell(34)}
      ${lightCell(34, 'scroll')}${lightCell(34, 'home')}${lightCell(34)}
      ${lightCell(34, 'book')}${lightCell(34)}${lightCell(34, 'grayB')}${lightCell(36, 'globe')}
    </div>`;
  }

  render() {
    return html`<div class="app">
      <div class="top row">
        ${row([
          ['logo', 12],
          [html`<div class="qcombo"><span>Drawing</span>${draw('arr')}</div>`, 107, 160],
          ['v8', 200], ['arr', 214], ['folder', 234], ['save', 256], ['saveset', 278], ['docset', 301],
          ['undo', 322.5], ['arr', 340], ['redo', 358], ['pin', 380], ['print', 401], ['more', 422],
          [html`<span class="title">666.dgn [2D - V8 DGN] - OpenRail Designer 2024</span>`, 973, 300],
          [html`<div class="search"><span>Search Ribbon (F4)</span>${draw('searchI')}<div class="s2" style="margin-left:3px">${draw('arr')}</div></div>`, 1420.5, 193],
          ['bell', 1533], ['help', 1558], ['arr', 1577], ['uc', 1595.6], ['arr', 1613],
          ['wmin', 1634.5], ['wmax', 1657], ['wclose', 1679],
        ])}
      </div>
      <div class="tabs row">
        ${row([
          [html`<div class="file">File</div>`, 23, 46],
          [html`<div class="hometab">Home</div>`, 77.5, 59],
          ...TABS.map(([t, cx, w]): Item => [html`${t}`, cx, w]),
          ['chev', 1676],
        ])}
      </div>
      <div class="ribbon">
        ${this.renderAttributes()}
        ${GROUPS.map((g) => this.renderGroup(g))}
      </div>
      <div class="vtitle">
        <span class="vdot"></span>View 1, 2D Metric Design
        <div class="vbtns">
          <div class="vb">${draw('vmin')}</div>
          <div class="vb">${draw('vrest')}</div>
          <div class="vb close"><svg width="12" height="10"><path d="M1 1L11 9M11 1L1 9" stroke="#fff" stroke-width="2.4"/></svg></div>
        </div>
      </div>
      <div class="vbar row">${row(VIEWBAR)}</div>
      <div class="canvas">
        ${this.renderCanvas()}
        ${this.renderTool()}
      </div>
      ${this.renderBottom()}
      ${this.renderStatus()}
    </div>`;
  }
}
